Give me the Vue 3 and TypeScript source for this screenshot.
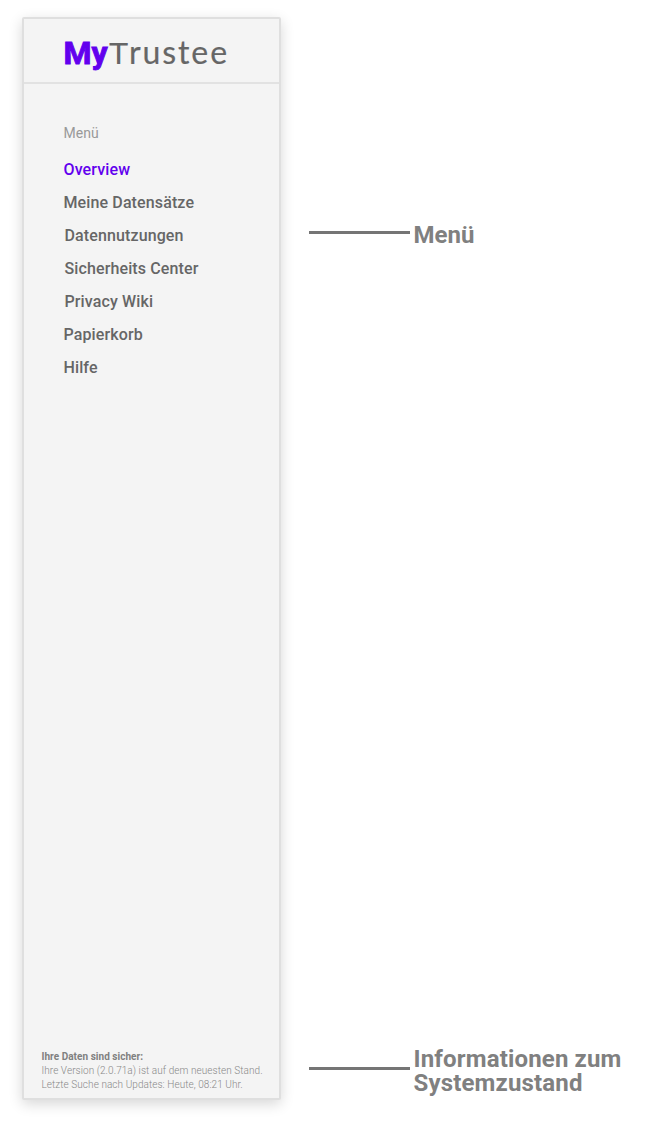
<script setup lang="ts">
import { ref } from 'vue'

interface Entry { label: string; indent?: boolean }

const entries: Entry[] = [
  { label: 'Overview' },
  { label: 'Meine Datensätze' },
  { label: 'Datennutzungen', indent: true },
  { label: 'Sicherheits Center', indent: true },
  { label: 'Privacy Wiki', indent: true },
  { label: 'Papierkorb' },
  { label: 'Hilfe' },
]
const active = ref(0)
</script>

<template>
  <main class="page">
    <aside class="sidebar">
      <header class="brand">
        <span class="my">My</span><span class="cap">T</span><span class="rest">rustee</span>
      </header>
      <nav class="menu">
        <div class="heading">Menü</div>
        <a
          v-for="(entry, i) in entries"
          :key="entry.label"
          class="entry"
          :class="{ active: i === active, indent: entry.indent }"
          @click="active = i"
        >{{ entry.label }}</a>
      </nav>
      <footer class="status">
        <strong>Ihre Daten sind sicher:</strong>
        <span class="version">Ihre Version (2.0.71a) ist auf dem neuesten Stand.</span>
        <span class="updates">Letzte Suche nach Updates: Heute, 08:21 Uhr.</span>
      </footer>
    </aside>
    <section class="notes">
      <div class="note"><i class="line"></i><div class="caption">Menü</div></div>
      <div class="note last"><i class="line"></i><div class="caption wide">Informationen zum<br>Systemzustand</div></div>
    </section>
  </main>
</template>

<style>
body { margin: 0; background: #fff; }
</style>

<style scoped>
.page {
  box-sizing: border-box;
  display: flex;
  width: 671px;
  height: 1127px;
  padding: 17px 0 27px 22px;
  overflow: hidden;
  font-family: Roboto, "Liberation Sans", sans-serif;
}
.sidebar {
  box-sizing: border-box;
  display: flex;
  flex-direction: column;
  width: 259px;
  height: 1083px;
  border: 2px solid #dfdfdf;
  border-radius: 2px;
  background: #f4f4f4;
  box-shadow: 0 4px 14px rgba(0, 0, 0, 0.16);
}
.brand {
  box-sizing: border-box;
  display: flex;
  align-items: baseline;
  height: 65px;
  padding: 14px 0 0 39.5px;
  border-bottom: 2px solid #e2e2e2;
  white-space: nowrap;
  line-height: 38px;
}
.my {
  width: 45.5px;
  color: #6200ee;
  font-size: 32px;
  font-weight: 700;
  -webkit-text-stroke: 0.9px #6200ee;
}
.cap, .rest { color: #666; font-family: Lato, sans-serif; }
.cap { width: 20px; font-size: 29px; transform: scaleX(1.12); transform-origin: 0 50%; }
.rest { font-size: 32px; letter-spacing: 1.9px; -webkit-text-stroke: 0.2px #666; }
.menu { display: flex; flex-direction: column; padding: 39px 0 0 39.5px; }
.heading { height: 30px; line-height: 20px; font-size: 14px; color: #999; }
.entry {
  height: 33px;
  line-height: 33px;
  font-size: 16px;
  font-weight: 500;
  letter-spacing: 0.12px;
  color: #666;
  cursor: pointer;
}
.entry.active { color: #6200ee; }
.entry.indent { padding-left: 1px; }
.status {
  display: flex;
  flex-direction: column;
  margin-top: auto;
  padding: 0 0 6px 17.5px;
  color: #888;
  font-size: 10px;
  line-height: 14px;
  font-weight: 300;
  letter-spacing: 0.065px;
  white-space: nowrap;
}
.status strong { color: #808080; font-weight: 700; letter-spacing: 0.04px; }
.notes { display: flex; flex-direction: column; padding: 206px 0 5px 27.5px; }
.note { display: flex; align-items: flex-start; gap: 4px; }
.line { width: 101px; height: 3px; margin-top: 8.4px; background: #757575; }
.last { margin-top: auto; }
.last .line { margin-top: 20.4px; }
.caption { color: #808080; font-size: 24px; line-height: 24px; font-weight: 700; white-space: nowrap; }
.wide { letter-spacing: 0.16px; }
</style>
